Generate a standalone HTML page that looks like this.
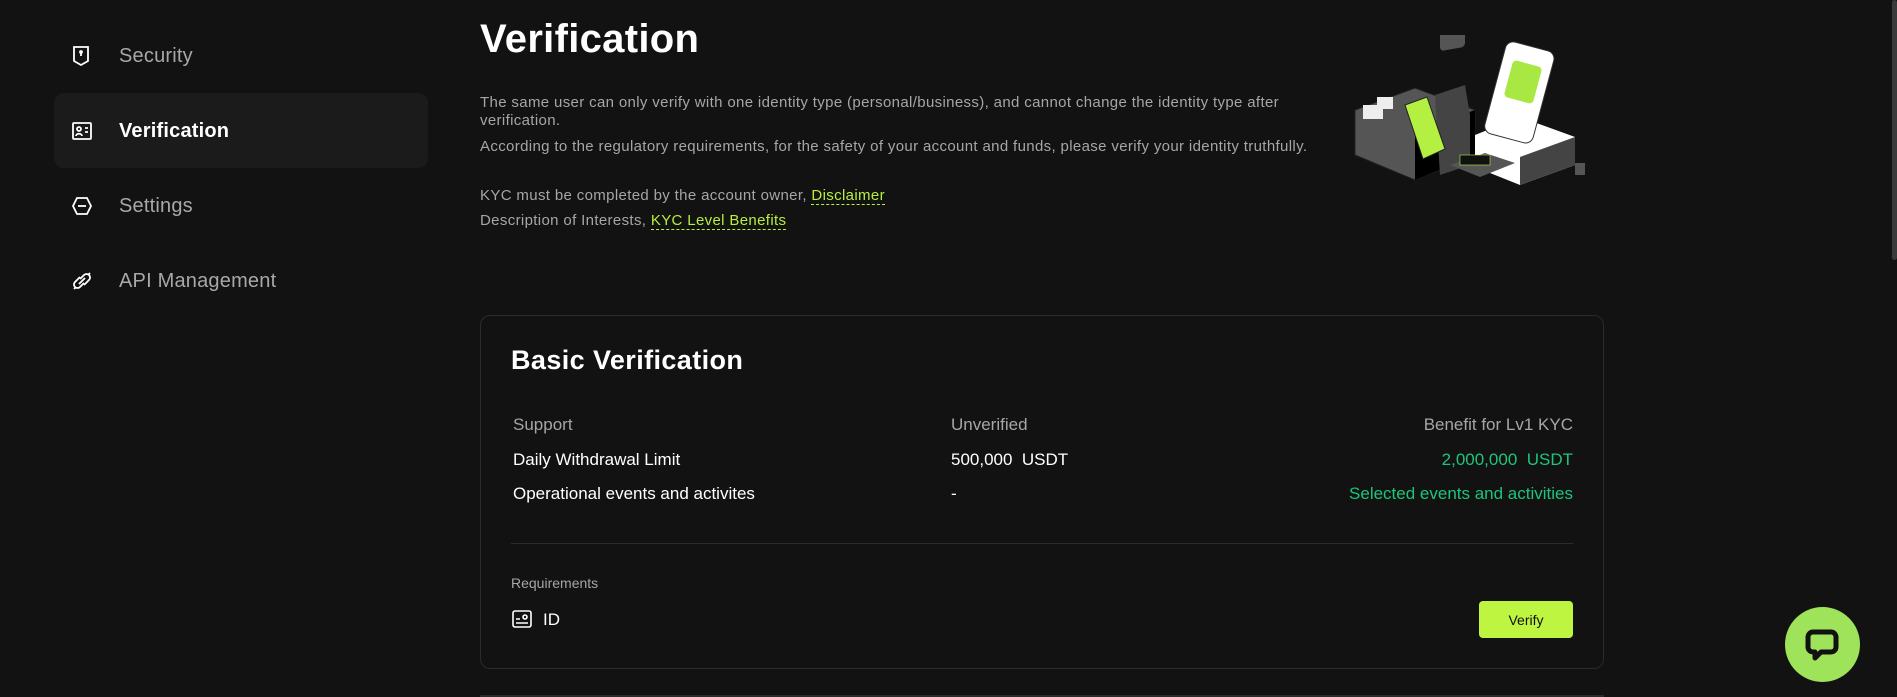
<!DOCTYPE html>
<html><head><meta charset="utf-8"><style>
*{margin:0;padding:0;box-sizing:border-box}
body{width:1897px;height:697px;background:#121212;font-family:"Liberation Sans",sans-serif;color:#fff;overflow:hidden;position:relative}
.abs{position:absolute}
.nav{position:absolute;left:54px;width:374px;height:75px;border-radius:10px;display:flex;align-items:center;font-size:20px;color:#a8a8a8;letter-spacing:.2px}
.nav svg{position:absolute;left:17px}
.nav span{position:absolute;left:65px;top:27px}
.nav.act{background:#1b1b1b;color:#fff;font-weight:bold}
.p{position:absolute;left:480px;font-size:15px;letter-spacing:.35px;color:#a6a6a6;white-space:nowrap}
.lk{color:#b8f03c;border-bottom:1px dashed #b8f03c}
.row{position:absolute;left:513px;width:1060px;font-size:17px;color:#fff}
.row .c2{position:absolute;left:438px}
.row .c3{position:absolute;right:0;color:#1ec47a}
</style></head><body>
<div class="nav" style="top:18px"><svg width="20" height="22" viewBox="0 0 20 22" fill="none" stroke="#fff" stroke-width="1.8"><path d="M3 2h14v14l-7 4-7-4z"/><path d="M10 7v4" /><circle cx="10" cy="7" r="1" fill="#fff"/></svg><span>Security</span></div>
<div class="nav act" style="top:93px"><svg width="22" height="20" viewBox="0 0 22 20" fill="none" stroke="#fff" stroke-width="1.8"><rect x="2" y="2" width="18" height="16" rx="1"/><circle cx="8" cy="8" r="2"/><path d="M5 15c0-3 6-3 6 0M14 7h3M14 11h3"/></svg><span>Verification</span></div>
<div class="nav" style="top:168px"><svg width="22" height="22" viewBox="0 0 22 22" fill="none" stroke="#fff" stroke-width="1.8"><path d="M6 3h10l4 8-4 8H6l-4-8z"/><path d="M7 11h8"/></svg><span>Settings</span></div>
<div class="nav" style="top:243px"><svg width="22" height="22" viewBox="0 0 22 22" fill="none" stroke="#fff" stroke-width="1.8"><path d="M9 7l-5 5a3 3 0 0 0 5 5l4-4M13 15l5-5a3 3 0 0 0-5-5l-4 4M8 14l6-6M3 19l2-2M17 5l2-2"/></svg><span>API Management</span></div>

<div class="abs" style="left:480px;top:17px;font-size:40px;font-weight:bold;letter-spacing:.3px">Verification</div>
<div class="p" style="top:94px">The same user can only verify with one identity type (personal/business), and cannot change the identity type after</div>
<div class="p" style="top:112px">verification.</div>
<div class="p" style="top:138px">According to the regulatory requirements, for the safety of your account and funds, please verify your identity truthfully.</div>
<div class="p" style="top:187px">KYC must be completed by the account owner, <span class="lk">Disclaimer</span></div>
<div class="p" style="top:212px">Description of Interests, <span class="lk">KYC Level Benefits</span></div>

<svg class="abs" style="left:1345px;top:35px" width="255" height="155" viewBox="0 0 255 155">
<path d="M10 75l60-22 60 22v45l-60 25-60-25z" fill="#555" stroke="#222"/>
<path d="M70 97l60-22v45l-60 25z" fill="#000"/>
<rect x="18" y="70" width="20" height="14" fill="#eee"/><rect x="32" y="62" width="16" height="12" fill="#eee"/>
<path d="M90 60l30-10 5 30v50l-30 10z" fill="#444"/>
<rect x="95" y="5" width="25" height="28" rx="4" fill="#555" transform="skewY(-10)"/>
<path d="M60 70l22-8 18 52-22 10z" fill="#b3f041" stroke="#222"/>
<path d="M130 100l45-18 55 20v28l-55 20-45-18z" fill="#fff"/>
<path d="M175 122l55-20v28l-55 20z" fill="#444"/>
<rect x="150" y="10" width="50" height="95" rx="8" fill="#fff" stroke="#333" transform="rotate(15 175 55)"/>
<rect x="163" y="28" width="30" height="38" rx="4" fill="#a9e843" transform="rotate(15 178 47)"/>
<path d="M105 130l35-12 30 10-35 14z" fill="#555"/>
<rect x="115" y="120" width="30" height="10" fill="#111" stroke="#b3f041" stroke-width=".6"/>
<rect x="230" y="128" width="10" height="12" fill="#555"/>
</svg>

<div class="abs" style="left:480px;top:315px;width:1124px;height:354px;border:1px solid #2b2b2b;border-radius:10px"></div>
<div class="abs" style="left:511px;top:345px;font-size:27px;font-weight:bold;letter-spacing:.4px">Basic Verification</div>
<div class="row" style="top:415px;color:#a6a6a6"><span>Support</span><span class="c2">Unverified</span><span class="c3" style="color:#a6a6a6">Benefit for Lv1 KYC</span></div>
<div class="row" style="top:450px"><span>Daily Withdrawal Limit</span><span class="c2">500,000&nbsp; USDT</span><span class="c3">2,000,000&nbsp; USDT</span></div>
<div class="row" style="top:484px"><span>Operational events and activites</span><span class="c2">-</span><span class="c3">Selected events and activities</span></div>
<div class="abs" style="left:511px;top:543px;width:1062px;height:1px;background:#2b2b2b"></div>
<div class="abs" style="left:511px;top:575px;font-size:14px;color:#a6a6a6">Requirements</div>
<svg class="abs" style="left:512px;top:610px" width="20" height="18" viewBox="0 0 20 18" fill="none" stroke="#fff" stroke-width="1.6"><rect x="1" y="1" width="18" height="16" rx="2"/><circle cx="13" cy="7" r="2"/><path d="M4 9h4M4 13h12"/></svg>
<div class="abs" style="left:543px;top:610px;font-size:17px">ID</div>
<div class="abs" style="left:1479px;top:601px;width:94px;height:37px;background:#bdf541;border-radius:4px;color:#111;font-size:14px;display:flex;align-items:center;justify-content:center">Verify</div>
<div class="abs" style="left:480px;top:695px;width:1124px;height:2px;background:#2b2b2b"></div>

<div class="abs" style="left:1785px;top:607px;width:75px;height:75px;border-radius:50%;background:#9fe35a"></div>
<svg class="abs" style="left:1802px;top:624px" width="40" height="40" viewBox="0 0 40 40"><path d="M11 8h18a5 5 0 0 1 5 5v10a5 5 0 0 1-5 5H19l-6 6v-6h-2a5 5 0 0 1-5-5V13a5 5 0 0 1 5-5z" fill="none" stroke="#111" stroke-width="5" stroke-linejoin="round"/></svg>
<div class="abs" style="left:1892px;top:0;width:5px;height:260px;background:#3a3a3a;border-radius:3px"></div>
</body></html>
